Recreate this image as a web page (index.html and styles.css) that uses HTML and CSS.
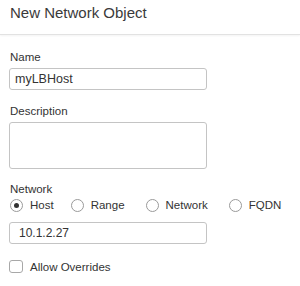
FILE: index.html
```html
<!DOCTYPE html>
<html lang="en">
<head>
    <meta charset="UTF-8">
    <title>New Network Object</title>
    <link rel="stylesheet" href="styles.css">
</head>
<body>
    <div class="header">
        <h1>New Network Object</h1>
    </div>

    <div class="form">
        <label class="label">Name</label>
        <div class="field">myLBHost</div>

        <label class="label label-gap">Description</label>
        <div class="field area"></div>

        <label class="label label-net">Network</label>
        <div class="radios">
            <span class="radio radio-first"><span class="dot checked"></span>Host</span>
            <span class="radio"><span class="dot"></span>Range</span>
            <span class="radio"><span class="dot"></span>Network</span>
            <span class="radio"><span class="dot"></span>FQDN</span>
        </div>
        <div class="field field-net">10.1.2.27</div>

        <div class="check">
            <span class="box"></span>Allow Overrides
        </div>
    </div>
</body>
</html>
```

FILE: styles.css
```css
body {
    margin: 0;
    font-family: "Liberation Sans", Arial, sans-serif;
    color: #333;
    background: #fff;
}

.header {
    height: 35px;
    border-bottom: 1px solid #e2e2e2;
    box-shadow: 0 1px 2px rgba(0, 0, 0, 0.05);
    padding: 4px 10px 0;
    box-sizing: border-box;
}

h1 {
    margin: 0;
    font-size: 15px;
    font-weight: normal;
    line-height: 18px;
    color: #3a3a3a;
}

.form {
    padding: 15px 9px 0;
    display: flex;
    flex-direction: column;
    align-items: flex-start;
}

.label {
    font-size: 11.5px;
    line-height: 14px;
    margin-bottom: 4px;
    padding-left: 1px;
}

.label-gap {
    margin-top: 14px;
}

.label-net {
    margin-top: 13px;
    margin-bottom: 0;
}

.field {
    width: 198px;
    height: 22px;
    box-sizing: border-box;
    border: 1px solid #c4c4c4;
    border-radius: 3px;
    font-size: 12.5px;
    line-height: 20px;
    padding-left: 5px;
}

.area {
    height: 47px;
}

.radios {
    display: flex;
    height: 18px;
    align-items: center;
    font-size: 11.5px;
}

.radio {
    display: flex;
    align-items: center;
    margin-left: 20px;
}

.radio-first {
    margin-left: 0;
    margin-right: -4px;
}

.dot {
    width: 13px;
    height: 13px;
    box-sizing: border-box;
    border: 1px solid #9a9a9a;
    border-radius: 50%;
    margin-right: 7px;
    margin-left: 1px;
    position: relative;
}

.dot.checked::after {
    content: "";
    position: absolute;
    left: 3px;
    top: 3px;
    width: 5px;
    height: 5px;
    border-radius: 50%;
    background: #333;
}

.field-net {
    margin-top: 8px;
    padding-left: 9px;
    font-size: 12px;
}

.check {
    margin-top: 16px;
    display: flex;
    align-items: center;
    font-size: 11.5px;
}

.box {
    width: 14px;
    height: 13px;
    box-sizing: border-box;
    border: 1px solid #a8a8a8;
    border-radius: 3px;
    margin-right: 7px;
}
```
